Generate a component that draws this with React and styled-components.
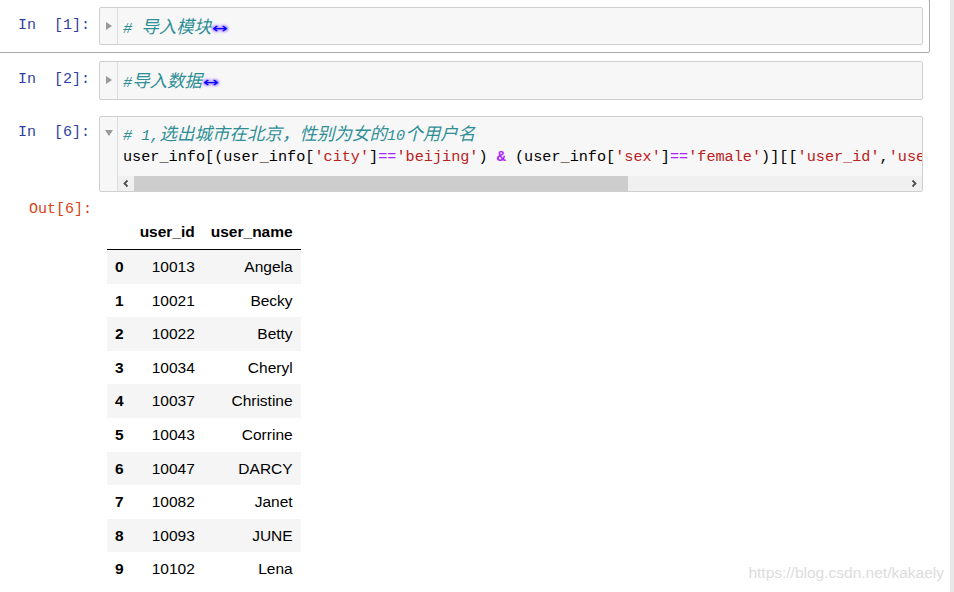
import React from "react";
import styled, { createGlobalStyle } from "styled-components";

const GlobalStyle = createGlobalStyle`
  html, body { margin: 0; padding: 0; background: #fff; overflow: hidden; }
  #root { width: 954px; height: 592px; }
`;

const MONO = `"Liberation Mono", "DejaVu Sans Mono", monospace`;
const CJK = `"Noto Sans CJK SC", "Noto Sans CJK JP", sans-serif`;

const Page = styled.div`
  position: relative;
  display: flex;
  width: 954px;
  height: 592px;
  overflow: hidden;
`;

const Notebook = styled.div`
  flex: 1;
  display: flex;
  flex-direction: column;
  margin-top: -1px;
`;

const Strip = styled.div`
  width: 4px;
  flex: none;
  background: #e8e8e8;
`;

const Cell = styled.div`
  box-sizing: border-box;
  width: 936px;
  margin-left: -6px;
  padding: 7px 6px 7px 5px;
  border: 1px solid ${(p) => (p.$selected ? "#ababab" : "transparent")};
  border-radius: 2px;
  display: flex;
  flex-direction: column;
`;

const Row = styled.div`
  display: flex;
  align-items: flex-start;
`;

const Prompt = styled.div`
  box-sizing: border-box;
  width: 99px;
  flex: none;
  text-align: right;
  white-space: pre;
  font-family: ${MONO};
  font-size: 15px;
  line-height: 24px;
  padding-top: ${(p) => p.$top}px;
  padding-right: ${(p) => (p.$out ? 7 : 9)}px;
  color: ${(p) => (p.$out ? "#D84315" : "#303F9F")};
`;

const InputBox = styled.div`
  flex: 1;
  min-width: 0;
  display: flex;
  border: 1px solid #cfcfcf;
  border-radius: 2px;
  background: #f7f7f7;
`;

const Gutter = styled.div`
  width: 17px;
  flex: none;
  border-right: 1px solid #dddddd;
  padding-top: ${(p) => p.$top}px;
  display: flex;
  flex-direction: column;
  align-items: center;
`;

const TriBox = styled.div`
  height: 24px;
  display: flex;
  align-items: center;
  justify-content: center;
`;

const Triangle = styled.div`
  width: 0;
  height: 0;
  ${(p) =>
    p.$open
      ? `border-top: 6px solid #999; border-left: 4px solid transparent; border-right: 4px solid transparent;`
      : `border-left: 6px solid #999; border-top: 4px solid transparent; border-bottom: 4px solid transparent;`}
`;

const Editor = styled.div`
  flex: 1;
  min-width: 0;
  display: flex;
  flex-direction: column;
`;

const Code = styled.div`
  overflow: hidden;
  white-space: pre;
  font-family: ${MONO};
  font-size: 15.2px;
  line-height: 24px;
  color: #000;
  padding: ${(p) => p.$top}px 6px ${(p) => p.$bottom}px 5px;
`;

const Line = styled.div`
  height: 24px;
`;

const Comment = styled.span`
  font-style: italic;
  color: #2f8f96;
`;

const Cjk = styled.span`
  font-family: ${CJK};
  font-size: 17.5px;
  line-height: 24px;
`;

const Str = styled.span`
  color: #ba2121;
`;

const Op = styled.span`
  color: #aa22ff;
  font-weight: ${(p) => (p.$bold ? "bold" : "normal")};
`;

const Fold = styled.span`
  display: inline-block;
  width: 18px;
  text-align: center;
  font-family: "DejaVu Sans", sans-serif;
  font-style: normal;
  font-size: 14px;
  line-height: 0.3;
  color: #0000ff;
  transform: scaleX(1.35);
  text-shadow: #b9f 1px 1px 2px, #b9f -1px -1px 2px, #b9f 1px -1px 2px, #b9f -1px 1px 2px;
`;

const ScrollBar = styled.div`
  display: flex;
  height: 15px;
  background: #f0f0f0;
`;

const ScrollArrow = styled.div`
  width: 16px;
  flex: none;
  display: flex;
  align-items: center;
  justify-content: center;
`;

const ScrollTrack = styled.div`
  flex: 1;
  display: flex;
`;

const Thumb = styled.div`
  width: ${(p) => p.$w}px;
  height: 100%;
  background: #cdcdcd;
`;

const Output = styled.div`
  flex: 1;
  padding: 23px 0 0 8px;
`;

const Table = styled.table`
  border-collapse: collapse;
  font-family: "Liberation Sans", Arial, sans-serif;
  font-size: 15.5px;
  color: #000;
`;

const HeadRow = styled.tr`
  border-bottom: 1px solid #000;
`;

const Th = styled.th`
  padding: 8px;
  line-height: 18px;
  font-weight: bold;
  text-align: ${(p) => (p.$left ? "left" : "right")};
`;

const BodyRow = styled.tr`
  background: ${(p) => (p.$shaded ? "#f5f5f5" : "#fff")};
`;

const IndexCell = styled.th`
  padding: 8px;
  line-height: 17.6px;
  font-weight: bold;
  text-align: left;
`;

const Td = styled.td`
  padding: 8px;
  line-height: 17.6px;
  text-align: right;
`;

const Watermark = styled.div`
  position: absolute;
  right: 10px;
  bottom: 10px;
  font-family: "Liberation Sans", Arial, sans-serif;
  font-size: 15.5px;
  line-height: 18px;
  color: #dcdcdc;
`;

const Chevron = ({ dir }) => (
  <svg width="8" height="9" viewBox="0 0 8 9">
    <polyline
      points={dir === "left" ? "5.5,1.5 2.5,4.5 5.5,7.5" : "2.5,1.5 5.5,4.5 2.5,7.5"}
      fill="none"
      stroke="#505050"
      strokeWidth="1.8"
    />
  </svg>
);

const rows = [
  ["0", "10013", "Angela"],
  ["1", "10021", "Becky"],
  ["2", "10022", "Betty"],
  ["3", "10034", "Cheryl"],
  ["4", "10037", "Christine"],
  ["5", "10043", "Corrine"],
  ["6", "10047", "DARCY"],
  ["7", "10082", "Janet"],
  ["8", "10093", "JUNE"],
  ["9", "10102", "Lena"],
];

export default function App() {
  return (
    <>
      <GlobalStyle />
      <Page>
        <Notebook>
          <Cell $selected>
            <Row>
              <Prompt $top={7}>{"In  [1]:"}</Prompt>
              <InputBox>
                <Gutter $top={6}>
                  <TriBox>
                    <Triangle />
                  </TriBox>
                </Gutter>
                <Editor>
                  <Code $top={6} $bottom={6}>
                    <Line>
                      <Comment>
                        {"# "}
                        <Cjk>导入模块</Cjk>
                        <Fold>↔</Fold>
                      </Comment>
                    </Line>
                  </Code>
                </Editor>
              </InputBox>
            </Row>
          </Cell>

          <Cell>
            <Row>
              <Prompt $top={7}>{"In  [2]:"}</Prompt>
              <InputBox>
                <Gutter $top={6}>
                  <TriBox>
                    <Triangle />
                  </TriBox>
                </Gutter>
                <Editor>
                  <Code $top={6} $bottom={7}>
                    <Line>
                      <Comment>
                        {"#"}
                        <Cjk>导入数据</Cjk>
                        <Fold>↔</Fold>
                      </Comment>
                    </Line>
                  </Code>
                </Editor>
              </InputBox>
            </Row>
          </Cell>

          <Cell>
            <Row>
              <Prompt $top={5}>{"In  [6]:"}</Prompt>
              <InputBox>
                <Gutter $top={4}>
                  <TriBox>
                    <Triangle $open />
                  </TriBox>
                </Gutter>
                <Editor>
                  <Code $top={4} $bottom={7}>
                    <Line>
                      <Comment>
                        {"# 1,"}
                        <Cjk>选出城市在北京，性别为女的</Cjk>
                        {"10"}
                        <Cjk>个用户名</Cjk>
                      </Comment>
                    </Line>
                    <Line>
                      {"user_info[(user_info["}
                      <Str>'city'</Str>
                      {"]"}
                      <Op>==</Op>
                      <Str>'beijing'</Str>
                      {") "}
                      <Op $bold>&amp;</Op>
                      {" (user_info["}
                      <Str>'sex'</Str>
                      {"]"}
                      <Op>==</Op>
                      <Str>'female'</Str>
                      {")][["}
                      <Str>'user_id'</Str>
                      {","}
                      <Str>'user_name'</Str>
                      {"]][:10]"}
                    </Line>
                  </Code>
                  <ScrollBar>
                    <ScrollArrow>
                      <Chevron dir="left" />
                    </ScrollArrow>
                    <ScrollTrack>
                      <Thumb $w={494} />
                    </ScrollTrack>
                    <ScrollArrow>
                      <Chevron dir="right" />
                    </ScrollArrow>
                  </ScrollBar>
                </Editor>
              </InputBox>
            </Row>
            <Row>
              <Prompt $out $top={6}>
                Out[6]:
              </Prompt>
              <Output>
                <Table>
                  <thead>
                    <HeadRow>
                      <Th $left></Th>
                      <Th>user_id</Th>
                      <Th>user_name</Th>
                    </HeadRow>
                  </thead>
                  <tbody>
                    {rows.map(([i, id, name], k) => (
                      <BodyRow key={i} $shaded={k % 2 === 0}>
                        <IndexCell>{i}</IndexCell>
                        <Td>{id}</Td>
                        <Td>{name}</Td>
                      </BodyRow>
                    ))}
                  </tbody>
                </Table>
              </Output>
            </Row>
          </Cell>
        </Notebook>
        <Strip />
        <Watermark>https://blog.csdn.net/kakaely</Watermark>
      </Page>
    </>
  );
}
